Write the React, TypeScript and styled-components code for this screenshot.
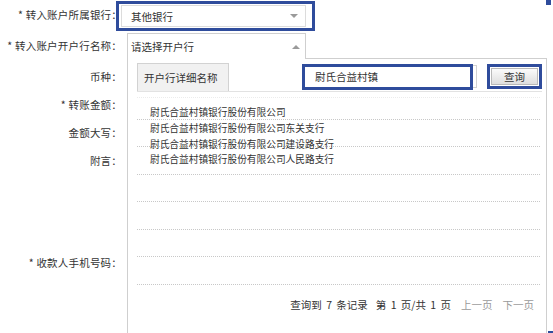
import styled, { createGlobalStyle } from "styled-components";

const blue = "#2f4c9c";

const GlobalStyle = createGlobalStyle`
  html, body {
    margin: 0;
    padding: 0;
    background: #fff;
  }
  body {
    font-family: "Noto Sans CJK SC", "Noto Sans", sans-serif;
    color: #333;
  }
`;

const Page = styled.div`
  position: relative;
  width: 553px;
  height: 333px;
  overflow: hidden;
  background: #fff;
`;

const Form = styled.div`
  display: flex;
  flex-direction: column;
  font-size: 10.5px;
`;

type RowProps = {
    $height: number;
    $top?: number;
};
const Row = styled.div<RowProps>`
  display: flex;
  align-items: flex-start;
  height: ${(p) => p.$height}px;
  margin-top: ${(p) => p.$top ?? 0}px;
`;

const Label = styled.div<{ $line?: number }>`
  width: 122px;
  flex: none;
  text-align: right;
  white-space: nowrap;
  letter-spacing: 0.2px;
  line-height: ${(p) => p.$line ?? 28}px;
`;

const Field = styled.div`
  position: relative;
  margin-left: 5px;
`;

const SelectFrame = styled.div`
  margin-left: -11px;
  margin-top: 1px;
  width: 199px;
  height: 30px;
  box-sizing: border-box;
  border: 3px solid ${blue};
  padding: 1px 6px 1px 2px;
`;

const Select = styled.div`
  display: flex;
  align-items: center;
  justify-content: space-between;
  height: 100%;
  box-sizing: border-box;
  border: 1px solid #dcdcdc;
  padding: 0 7px 0 9px;
  background: #fff;
`;

const Caret = styled.span<{ $up?: boolean }>`
  width: 0;
  height: 0;
  border-left: 4px solid transparent;
  border-right: 4px solid transparent;
  ${(p) =>
        p.$up ? `border-bottom: 4px solid #9a9a9a;` : `border-top: 4px solid #9a9a9a;`}
`;

const Trigger = styled.div`
  position: relative;
  z-index: 2;
  margin-top: 1px;
  width: 179px;
  height: 26px;
  box-sizing: border-box;
  border: 1px solid #cfcfcf;
  border-bottom: none;
  background: #fff;
  display: flex;
  align-items: center;
  justify-content: space-between;
  padding: 0 5px 0 3px;
`;

const Panel = styled.div`
  position: absolute;
  z-index: 1;
  top: 26px;
  left: 0;
  width: 420px;
  height: 290px;
  box-sizing: border-box;
  border: 1px solid #cfcfcf;
  background: #fff;
  padding: 4px 4px 0 9px;
  display: flex;
  flex-direction: column;
`;

const Toolbar = styled.div`
  display: flex;
  align-items: flex-start;
  height: 28px;
  border-bottom: 1px solid #e2e2e2;
`;

const Tab = styled.div`
  width: 92px;
  height: 28px;
  box-sizing: border-box;
  border: 1px solid #d2d2d2;
  border-bottom: none;
  background: #f1f1f1;
  padding-left: 6px;
  line-height: 27px;
`;

const SearchBox = styled.div`
  margin-left: 73px;
  margin-top: 2px;
  width: 175px;
  height: 23px;
  box-sizing: border-box;
  border: 1px solid #d2d2d2;
  display: flex;
  align-items: center;
`;

const SearchInput = styled.input`
  width: 171px;
  height: 26px;
  margin-left: -1px;
  box-sizing: border-box;
  border: 3px solid ${blue};
  padding: 0 0 0 10px;
  outline: none;
  font: inherit;
  font-size: 10.5px;
  color: #333;
  background: #fff;
`;

const QueryFrame = styled.div`
  margin-left: 10px;
  margin-top: 1px;
  width: 55px;
  height: 25px;
  box-sizing: border-box;
  border: 3px solid ${blue};
  padding: 1px;
`;

const QueryButton = styled.button`
  width: 100%;
  height: 100%;
  border: 1px solid #b9b9b9;
  background: linear-gradient(#fbfbfb, #dedede);
  font: inherit;
  font-size: 10.5px;
  color: #333;
  padding: 0;
`;

const Stack = styled.div`
  display: grid;
  margin-right: 2px;
`;

const Lines = styled.div`
  grid-area: 1 / 1;
  display: flex;
  flex-direction: column;
`;

const Line = styled.div<{ $faint?: boolean }>`
  height: ${(p) => (p.$faint ? 6 : 27.5)}px;
  flex: none;
  box-sizing: border-box;
  border-bottom: 1px dotted ${(p) => (p.$faint ? "#ececec" : "#c8c8c8")};
`;

const Options = styled.ul`
  grid-area: 1 / 1;
  list-style: none;
  margin: 0;
  padding: 13px 0 0 13px;
  font-size: 9.7px;
  line-height: 15.8px;
  align-self: start;
`;

const Pager = styled.div`
  margin-top: 10px;
  line-height: 20px;
  text-align: right;
  padding-right: 8px;
  white-space: nowrap;
  word-spacing: 2px;
`;

const PagerGroup = styled.span`
  margin-left: 8px;
`;

const PagerLink = styled.span`
  color: #9a9a9a;
  margin-left: 10px;
`;

const Mark = styled.span<{ $corner: "top" | "bottom" }>`
  position: absolute;
  right: 2px;
  width: 5px;
  background: ${blue};
  ${(p) => (p.$corner === "top" ? "top: 0; height: 5px;" : "bottom: 0; height: 2px; right: 0;")}
`;

const banks = [
    "尉氏合益村镇银行股份有限公司",
    "尉氏合益村镇银行股份有限公司东关支行",
    "尉氏合益村镇银行股份有限公司建设路支行",
    "尉氏合益村镇银行股份有限公司人民路支行",
];

export default function App() {
    return (
        <>
            <GlobalStyle />
            <Page>
                <Form>
                    <Row $height={32}>
                        <Label $line={30}>* 转入账户所属银行：</Label>
                        <Field>
                            <SelectFrame>
                                <Select>
                                    其他银行
                                    <Caret />
                                </Select>
                            </SelectFrame>
                        </Field>
                    </Row>
                    <Row $height={28}>
                        <Label>* 转入账户开户行名称：</Label>
                        <Field>
                            <Trigger>
                                请选择开户行
                                <Caret $up />
                            </Trigger>
                            <Panel>
                                <Toolbar>
                                    <Tab>开户行详细名称</Tab>
                                    <SearchBox>
                                        <SearchInput defaultValue="尉氏合益村镇" />
                                    </SearchBox>
                                    <QueryFrame>
                                        <QueryButton>查询</QueryButton>
                                    </QueryFrame>
                                </Toolbar>
                                <Stack>
                                    <Lines>
                                        <Line $faint />
                                        <Line style={{ height: 21.5 }} />
                                        {Array.from({ length: 6 }, (_, i) => (
                                            <Line key={i} />
                                        ))}
                                    </Lines>
                                    <Options>
                                        {banks.map((name) => (
                                            <li key={name}>{name}</li>
                                        ))}
                                    </Options>
                                </Stack>
                                <Pager>
                                    查询到 7 条记录
                                    <PagerGroup>第 1 页/共 1 页</PagerGroup>
                                    <PagerLink>上一页</PagerLink>
                                    <PagerLink>下一页</PagerLink>
                                </Pager>
                            </Panel>
                        </Field>
                    </Row>
                    <Row $height={28} $top={3}>
                        <Label>币种：</Label>
                    </Row>
                    <Row $height={28}>
                        <Label>* 转账金额：</Label>
                    </Row>
                    <Row $height={28}>
                        <Label>金额大写：</Label>
                    </Row>
                    <Row $height={102}>
                        <Label>附言：</Label>
                    </Row>
                    <Row $height={28}>
                        <Label>* 收款人手机号码：</Label>
                    </Row>
                </Form>
                <Mark $corner="top" />
                <Mark $corner="bottom" />
            </Page>
        </>
    );
}
